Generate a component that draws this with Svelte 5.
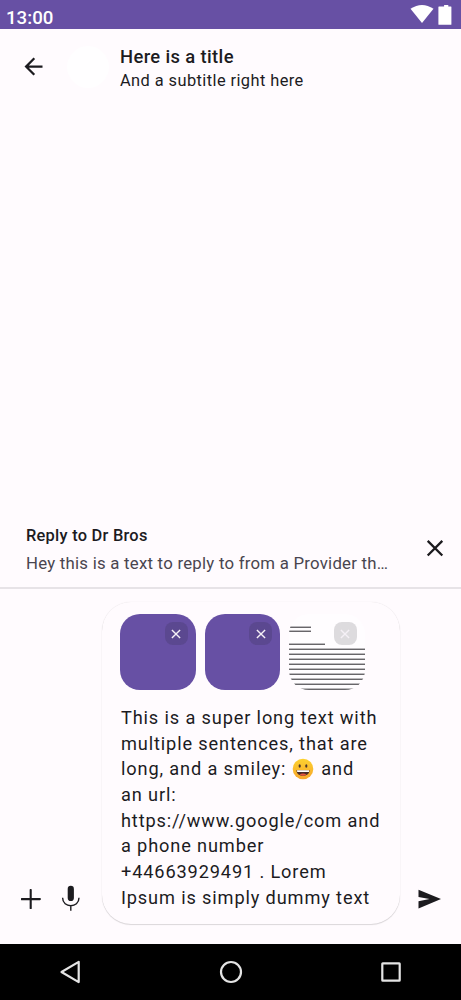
<script>
  const lines = ['This is a super long text with', 'multiple sentences, that are', null, 'an url:', 'https://www.google/com and', 'a phone number', '+44663929491 . Lorem', 'Ipsum is simply dummy text'];
  const thumbs = ['solid', 'solid', 'document'];
  const rules = [
    [13, 22], [17, 22], [30, 36], [35, 76], [40, 76], [45, 76], [50, 76], [55, 76], [60, 76], [65, 76], [70, 76], [75, 76]
  ];
</script>

<div class="screen">
  <div class="status">
    <span>13:00</span>
    <svg width="44" height="29" viewBox="0 0 44 29" fill="#fff">
      <path d="M.5 8.8Q12 1.2 23.5 8.8L12 23Z" />
      <path d="M31.3 6.4h2.8V5h4.2v1.4H41q.4 0 .4.5v17.3q0 .5-.5.5h-12q-.5 0-.5-.5V6.900q0-.5.5-.5Z" />
    </svg>
  </div>
  <header>
    <svg class="back" width="27" height="27" viewBox="0 0 24 24"><path fill="#1c1b1f" d="M20 11H7.830l5.590-5.590L12 4l-8 8 8 8 1.410-1.410L7.830 13H20v-2z" /></svg>
    <div class="avatar"></div>
    <div class="heading">
      <h1>Here is a title</h1>
      <p>And a subtitle right here</p>
    </div>
  </header>
  <main></main>
  <section class="reply">
    <div class="quote">
      <h2>Reply to Dr Bros</h2>
      <p>Hey this is a text to reply to from a Provider th…</p>
    </div>
    <svg class="close" width="26" height="26" viewBox="0 0 26 26"><path d="M5.700 5.900l14.600 14.600M20.300 5.900L5.700 20.500" stroke="#1c1b1f" stroke-width="2.300" /></svg>
  </section>
  <section class="composer">
    <svg class="add" width="20" height="20" viewBox="0 0 20 20"><path d="M9.700 1v18.200M.7 10.100h18.200" stroke="#1c1b1f" stroke-width="2.100" stroke-linecap="round" /></svg>
    <svg class="mic" width="20" height="26" viewBox="0 0 20 26">
      <rect x="6.700" y=".8" width="6.200" height="15.200" rx="3.100" fill="#1c1b1f" />
      <path d="M1.600 12.800C1.600 23.400 18 23.400 18 12.800M9.800 20.700v5" fill="none" stroke="#1c1b1f" stroke-width="1.400" />
    </svg>
    <div class="bubble">
      <div class="thumbs">
        {#each thumbs as kind}
          <div class="thumb {kind}">
            {#if kind === 'document'}
              <svg class="page" width="76" height="76" viewBox="0 0 76 76">
                {#each rules as [y, w]}
                  <rect x="0" {y} width={w} height="1" fill="#68666a" />
                  <rect x="0" y={y - 1} width={w} height="1" fill="#bcbabd" />
                {/each}
              </svg>
            {/if}
            <span class="remove"><svg width="10" height="10" viewBox="0 0 10 10"><path d="M.9.900l8.200 8.200M9.100.900L.9 9.100" stroke="#f5f0f6" stroke-width="1.400" /></svg></span>
          </div>
        {/each}
      </div>
      <div class="message">
        {#each lines as line}
          {#if line}
            <div>{line}</div>
          {:else}
            <div class="with-face">
              <span>long, and a smiley:</span>
              <svg class="face" width="22" height="22" viewBox="0 0 22 22">
                <defs><linearGradient id="face" x2="0" y2="1"><stop stop-color="#fdd22f" /><stop offset="1" stop-color="#f7a62c" /></linearGradient></defs>
                <circle cx="11" cy="11" r="10.300" fill="url(#face)" />
                <ellipse cx="7.700" cy="8" rx="1.100" ry="1.800" fill="#4b352c" />
                <ellipse cx="14.300" cy="8" rx="1.100" ry="1.800" fill="#4b352c" />
                <path d="M4.400 12.200h13.200c-.3 7.400-12.900 7.400-13.200 0Z" fill="#4b2b27" />
                <path d="M5 12.200h12v1.700H5.200Z" fill="#fff" />
                <path d="M7.500 16.700q3.500-2.200 7 0-3.500 2.100-7 0Z" fill="#e8553d" />
              </svg>
              <span>and</span>
            </div>
          {/if}
        {/each}
      </div>
    </div>
    <svg class="send" width="24" height="20" viewBox="0 0 24 20"><path d="M.5.700L23 10.100 .5 19.500V12.300L11.500 10.100 .5 7.900Z" fill="#1c1b1f" /></svg>
  </section>
  <nav>
    <svg width="24" height="24" viewBox="0 0 24 24"><path d="M19.700 1.900v20.200L2.500 12Z" /></svg>
    <svg width="24" height="24" viewBox="0 0 24 24"><circle cx="12" cy="12" r="10" /></svg>
    <svg width="24" height="24" viewBox="0 0 24 24"><rect x="3.300" y="3.300" width="17.400" height="17.400" rx=".5" /></svg>
  </nav>
</div>

<style>
  :global(body) { background: #fffbfe; }
  .screen { width: 461px; height: 1000px; display: flex; flex-direction: column; background: #fffbfe; color: #1c1b1f; font-family: Roboto, sans-serif; overflow: hidden; }
  svg { display: block; flex: none; }
  h1, h2, p { margin: 0; white-space: nowrap; }
  .status { height: 29px; box-sizing: border-box; flex: none; background: #6750a4; color: #fff; display: flex; justify-content: space-between; padding: 0 7px 0 6px; font-size: 18.700px; font-weight: 500; line-height: 37px; }
  header { height: 77px; flex: none; display: flex; align-items: flex-start; }
  .back { margin: 24px 0 0 19.500px; }
  .avatar { width: 42px; height: 42px; border-radius: 50%; background: #fffeff; margin: 17px 11.500px 0 20px; }
  .heading { padding-top: 16px; }
  h1 { font-size: 18.400px; line-height: 23px; font-weight: 500; letter-spacing: .370px; }
  .heading p { font-size: 16.400px; line-height: 24px; padding-top: 1px; letter-spacing: .420px; }
  main { flex: 1; }
  .reply { height: 70px; flex: none; display: flex; justify-content: space-between; align-items: flex-start; border-bottom: 2px solid #e7e3e7; padding: 0 13px 0 26px; }
  h2 { font-size: 16.400px; line-height: 24px; margin-top: 7px; font-weight: 500; letter-spacing: .260px; }
  .reply p { font-size: 16.800px; line-height: 24px; margin-top: 3px; letter-spacing: .240px; color: #49454f; }
  .close { margin-top: 18px; }
  .composer { height: 355px; flex: none; display: flex; align-items: flex-end; }
  .add { margin: 0 0 35px 21px; }
  .mic { margin: 0 0 33px 20px; }
  .bubble { box-sizing: border-box; width: 298px; height: 322px; margin: 0 18px 20px 21px; border-radius: 29px; padding: 12px 18px 0 18.400px; background: #fffbfe; box-shadow: 0 0 1px #0002, 0 1px 1px #0002; }
  .thumbs { display: flex; gap: 9px; }
  .thumb { position: relative; width: 75.400px; height: 75.500px; border-radius: 20px; overflow: hidden; flex: none; }
  .solid { background: #6750a4; }
  .document { background: #fffdff; }
  .remove { position: absolute; right: 8px; top: 8px; width: 23px; height: 23px; border-radius: 8px; background: #1c1b1f26; display: grid; place-items: center; }
  .message { padding: 15.500px 0 0 .6px; font-size: 18.200px; line-height: 25.650px; letter-spacing: .860px; white-space: nowrap; }
  .with-face { display: flex; }
  .face { margin: 2px 7px 0 6px; }
  .send { margin-bottom: 35px; }
  nav { height: 56px; flex: none; background: #000; display: flex; align-items: center; justify-content: space-between; padding: 0 58px 0 59px; box-sizing: border-box; }
  nav svg { fill: none; stroke: #e4e4e4; stroke-width: 2.200; stroke-linejoin: round; }
</style>
